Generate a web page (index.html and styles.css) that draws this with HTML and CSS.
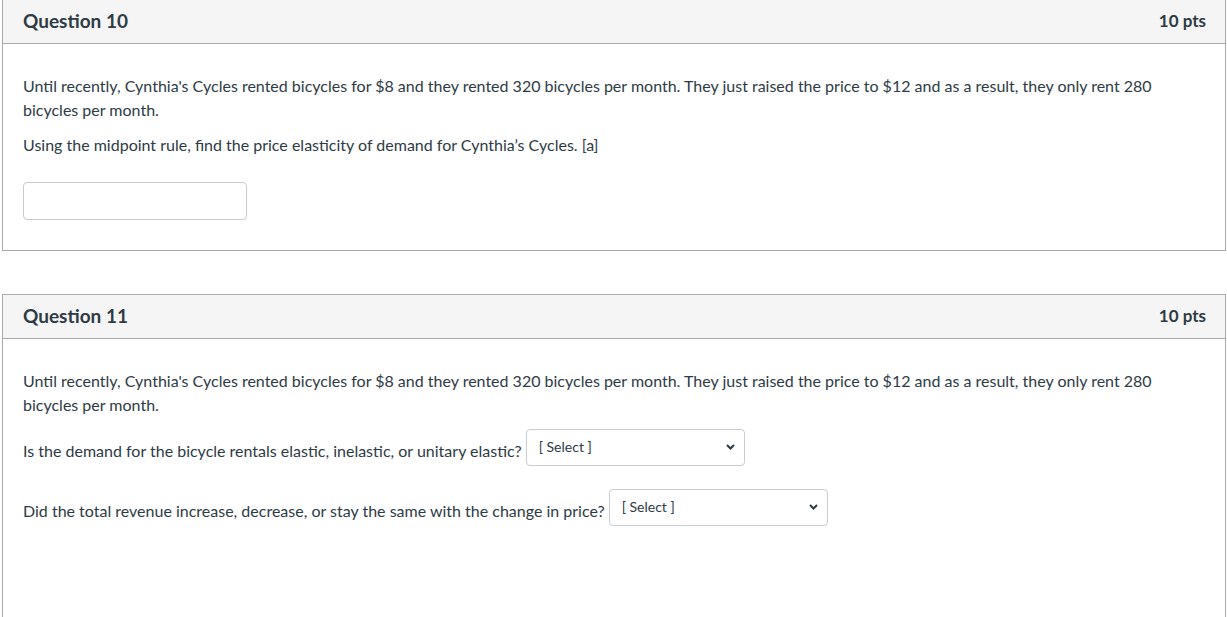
FILE: index.html
```html
<!DOCTYPE html>
<html>
<head>
<meta charset="utf-8">
<link rel="stylesheet" href="styles.css">
</head>
<body>
<div class="page">
  <div class="question first">
    <div class="header">
      <span class="title">Question 10</span>
      <span class="pts">10 pts</span>
    </div>
    <div class="body">
      <p>Until recently, Cynthia's Cycles rented bicycles for $8 and they rented 320 bicycles per month. They just raised the price to $12 and as a result, they only rent 280 bicycles per month.</p>
      <p>Using the midpoint rule, find the price elasticity of demand for Cynthia’s Cycles. [a]</p>
      <div class="answer-input"></div>
    </div>
  </div>

  <div class="question second">
    <div class="header">
      <span class="title">Question 11</span>
      <span class="pts">10 pts</span>
    </div>
    <div class="body tall">
      <p>Until recently, Cynthia's Cycles rented bicycles for $8 and they rented 320 bicycles per month. They just raised the price to $12 and as a result, they only rent 280 bicycles per month.</p>
      <div class="row">
        <span class="label">Is the demand for the bicycle rentals elastic, inelastic, or unitary elastic?</span>
        <div class="select">
          <span class="select-text">[ Select ]</span>
          <svg class="chev" width="9" height="6" viewBox="0 0 9 6"><path d="M1 1 L4.5 4.5 L8 1" fill="none" stroke="#2d3b45" stroke-width="2"/></svg>
        </div>
      </div>
      <div class="row">
        <span class="label">Did the total revenue increase, decrease, or stay the same with the change in price?</span>
        <div class="select">
          <span class="select-text">[ Select ]</span>
          <svg class="chev" width="9" height="6" viewBox="0 0 9 6"><path d="M1 1 L4.5 4.5 L8 1" fill="none" stroke="#2d3b45" stroke-width="2"/></svg>
        </div>
      </div>
    </div>
  </div>
</div>
</body>
</html>
```

FILE: styles.css
```css
html, body {
  margin: 0;
  padding: 0;
  background: #fff;
  overflow: hidden;
}
body {
  font-family: Lato, "Open Sans", sans-serif;
  color: #2d3b45;
  font-size: 16px;
}
.page {
  padding-left: 2px;
  width: 1224px;
}
.question {
  border: 1px solid #aaaaaa;
  box-sizing: border-box;
}
.question.first {
  margin-top: -1px;
}
.question.second {
  margin-top: 43px;
}
.header {
  background: #f5f5f5;
  border-bottom: 1px solid #aaaaaa;
  height: 44px;
  box-sizing: border-box;
  display: flex;
  align-items: center;
  justify-content: space-between;
  padding: 0 19px 3px 20px;
}
.title {
  font-weight: bold;
  font-size: 19px;
}
.pts {
  font-weight: bold;
  font-size: 17px;
  color: #2d3b45;
}
.body {
  padding: 30px 20px 30px 20px;
}
.body.tall {
  min-height: 400px;
}
p {
  margin: 0 0 11px 0;
  line-height: 24px;
  font-size: 16px;
}
.answer-input {
  width: 222px;
  height: 36px;
  border: 1px solid #c7cdd1;
  border-radius: 4px;
  margin-top: 25px;
}
.row {
  display: flex;
  align-items: flex-start;
  margin-top: 12px;
  height: 37px;
}
.row + .row {
  margin-top: 23px;
}
.label {
  font-size: 16px;
  line-height: 24px;
  margin-top: 10px;
  margin-right: 4px;
}
.select {
  width: 217px;
  height: 35px;
  border: 1px solid #c7cdd1;
  border-radius: 4px;
  position: relative;
}
.select-text {
  position: absolute;
  left: 12px;
  top: 8px;
  font-size: 14px;
  line-height: 18px;
  color: #2d3b45;
}
.chev {
  position: absolute;
  right: 9px;
  top: 14px;
}
```
